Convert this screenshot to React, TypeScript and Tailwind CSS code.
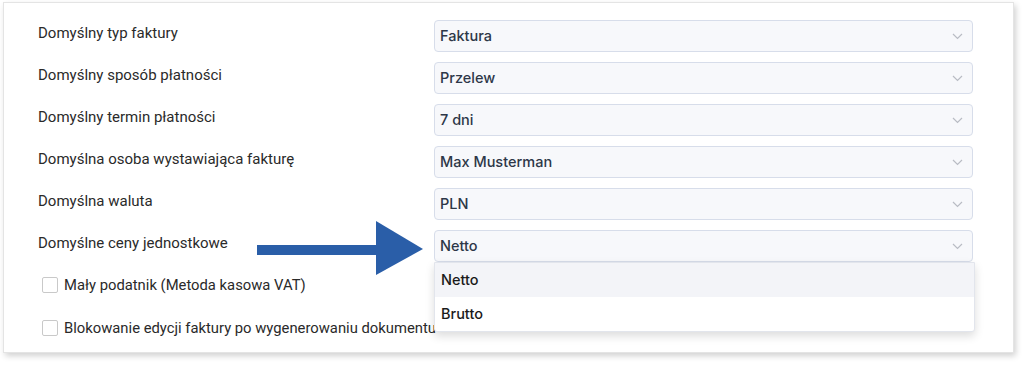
import React from 'react';

const rows = [
  { label: 'Domyślny typ faktury', value: 'Faktura' },
  { label: 'Domyślny sposób płatności', value: 'Przelew' },
  { label: 'Domyślny termin płatności', value: '7 dni' },
  { label: 'Domyślna osoba wystawiająca fakturę', value: 'Max Musterman' },
  { label: 'Domyślna waluta', value: 'PLN' },
  { label: 'Domyślne ceny jednostkowe', value: 'Netto', open: true },
];

const checks = ['Mały podatnik (Metoda kasowa VAT)', 'Blokowanie edycji faktury po wygenerowaniu dokumentu'];

const Chevron = () => (
  <svg width="11" height="7" viewBox="0 0 11 7" fill="none" className="shrink-0">
    <path d="M1 1l4.5 4.5L10 1" stroke="#b9bcc4" strokeWidth="1.2" />
  </svg>
);

const Select = ({ value, open }: { value: string; open?: boolean }) => (
  <div className="relative w-[539px]">
    <div className="h-8 flex items-center justify-between pl-[5px] pr-[9px] rounded-[4px] border border-[#d7ddea] bg-[#f7f8fb]">
      <span className="text-[14.5px] font-medium text-[#2d3748]" style={{ fontFamily: 'Inter, sans-serif' }}>{value}</span>
      <Chevron />
    </div>
    {open && (
      <div className="absolute left-0 top-8 z-20 w-[541px] bg-white border border-[#e2e5ec] rounded-b-[3px] shadow-[0_4px_10px_rgba(0,0,0,0.14)]">
        <div className="h-[34px] flex items-center pl-[6px] bg-[#f3f4f8] text-[14.5px] font-medium text-[#1a1a1a]" style={{ fontFamily: 'Inter, sans-serif' }}>Netto</div>
        <div className="h-[34px] flex items-center pl-[6px] text-[14.5px] font-medium text-[#1a1a1a]" style={{ fontFamily: 'Inter, sans-serif' }}>Brutto</div>
      </div>
    )}
  </div>
);

const App = () => {
  return (
    <div className="w-[1024px] h-[365px] bg-white pt-[2px] pl-[3px]" style={{ fontFamily: 'Roboto, sans-serif' }}>
      <div className="relative w-[1011px] h-[351px] border border-[#e4e4e4] bg-white shadow-[2px_3px_6px_rgba(0,0,0,0.18)] pl-[34px] pt-[17px]">
        <div className="flex flex-col gap-[10px]">
          {rows.map((r) => (
            <div key={r.label} className="flex items-start">
              <div className="w-[396px] pt-[2px] text-[15px] leading-[22px] text-[#2a2a2a]">{r.label}</div>
              <Select value={r.value} open={r.open} />
            </div>
          ))}
        </div>
        <div className="flex flex-col gap-[25px] mt-[14px] pl-[4px]">
          {checks.map((c) => (
            <div key={c} className="flex items-center gap-[6px]">
              <div className="w-4 h-4 rounded-[2px] border border-[#c9c9c9] bg-white" />
              <span className="text-[14.8px] leading-[18px] text-[#2a2a2a]">{c}</span>
            </div>
          ))}
        </div>
        <svg className="absolute left-[253px] top-[217px] z-10" width="166" height="56" viewBox="0 0 166 56">
          <rect x="0" y="25" width="122" height="10" fill="#2a5ea8" />
          <path d="M119 1L166 29L119 55Z" fill="#2a5ea8" />
        </svg>
      </div>
    </div>
  );
};

export default App;
